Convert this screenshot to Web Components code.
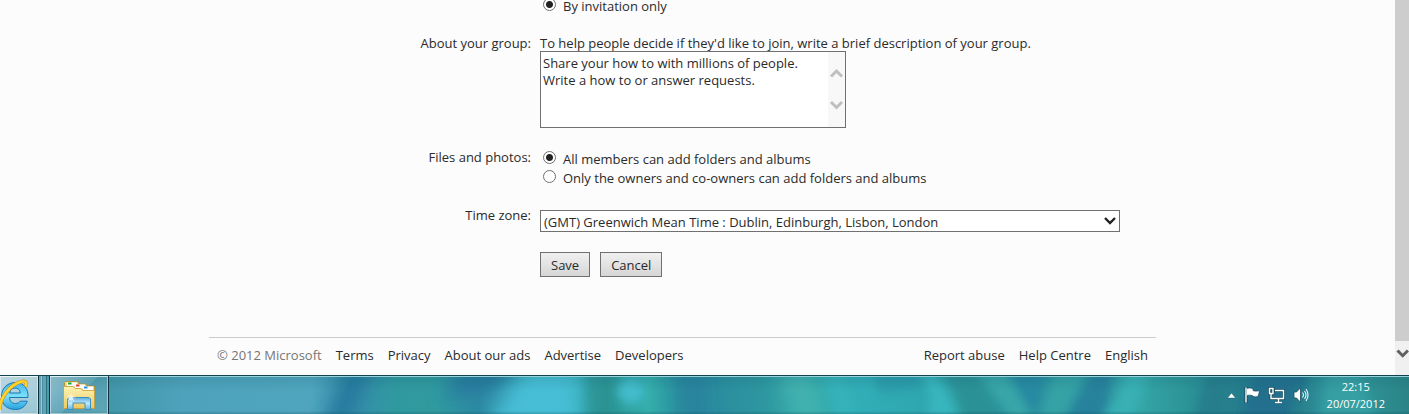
<!DOCTYPE html>
<html lang="en">
<head>
<meta charset="utf-8">
<title>Group options</title>
<style>
html,
body {
  height: 100%;
}

body {
  margin: 0;
  overflow: hidden;
  display: flex;
  flex-direction: column;
  background: #fcfcfc;
  color: #2a2a2a;
  font: 13px/17px "Open Sans", "Noto Sans", sans-serif;
}
</style>
</head>
<body>
<browser-view>
  <group-form></group-form>
  <page-footer>
    <span>© 2012 Microsoft</span>
    <a href="#terms">Terms</a>
    <a href="#privacy">Privacy</a>
    <a href="#ads">About our ads</a>
    <a href="#advertise">Advertise</a>
    <a href="#developers">Developers</a>
    <a slot="end" href="#report">Report abuse</a>
    <a slot="end" href="#help">Help Centre</a>
    <a slot="end" href="#language">English</a>
  </page-footer>
</browser-view>
<task-bar></task-bar>

<script>
/**
 * Attaches an open shadow root filled with the given markup.
 *
 * @param {HTMLElement} host
 * @param {string} html
 */
const render = (host, html) => {
  const template = document.createElement('template');
  template.innerHTML = html;
  host.attachShadow({ mode: 'open' }).appendChild(template.content.cloneNode(true));
};

/** Scrolling page area with its scroll bar. */
class BrowserView extends HTMLElement {
  constructor() {
    super();
    render(this, `
<style>
:host {
  flex: 1;
  min-height: 0;
  display: flex;
  overflow: hidden;
}

main {
  flex: 1;
  min-width: 0;
  padding: 0 239px 0 209px;
}

.scroll {
  width: 14px;
  display: flex;
  flex-direction: column;
  background: #f0f0f0;
}

.thumb {
  flex: 1;
  background: #cdcdcd;
}

.down {
  height: 34px;
  padding-top: 5px;
  box-sizing: border-box;
}

svg {
  display: block;
}
</style>
<main><slot></slot></main>
<div class="scroll">
  <div class="thumb"></div>
  <div class="down">
    <svg width="14" height="14" viewBox="0 0 14 14"><path d="M2.500 4.500l5.200 5.200 5.200-5.200" fill="none" stroke="#606060" stroke-width="3"/></svg>
  </div>
</div>
`);
  }
}

/** One line of the form: a right aligned label and its field. */
class FormRow extends HTMLElement {
  constructor() {
    super();
    render(this, `
<style>
:host {
  display: grid;
  grid-template-columns: 322px 1fr;
  column-gap: 9px;
}

.label {
  text-align: right;
}
</style>
<div class="label"><slot name="label"></slot></div>
<div><slot></slot></div>
`);
  }
}

/** A radio button with its text. */
class RadioOption extends HTMLElement {
  constructor() {
    super();
    render(this, `
<style>
:host {
  display: flex;
  align-items: flex-start;
  gap: 7px;
  height: 19px;
  padding-left: 3px;
}

::slotted(input) {
  appearance: none;
  box-sizing: border-box;
  width: 13px;
  height: 13px;
  margin: 1px 0 0;
  border: 1px solid #707070;
  border-radius: 50%;
  background: #fff;
}

::slotted(input:checked) {
  background: radial-gradient(circle, #212121 3px, #fff 4px);
}

::slotted(label) {
  padding-top: 1px;
}
</style>
<slot></slot>
`);
  }
}

/** Frame round a textarea, with scroll arrows on the right. */
class TextFrame extends HTMLElement {
  constructor() {
    super();
    render(this, `
<style>
:host {
  display: flex;
  box-sizing: border-box;
  width: 306px;
  height: 77px;
  border: 1px solid #707070;
  background: #fff;
}

::slotted(textarea) {
  flex: 1;
  min-width: 0;
  margin: 0;
  padding: 3px 2px;
  border: 0;
  outline: 0;
  resize: none;
  overflow: hidden;
  background: #fff;
  color: inherit;
  font: inherit;
}

.arrows {
  display: flex;
  flex-direction: column;
  gap: 20px;
  width: 17px;
  padding-top: 15px;
  background: #f8f8f8;
}

path {
  fill: none;
  stroke: #bfbfbf;
  stroke-width: 3;
}
</style>
<slot></slot>
<div class="arrows">
  <svg width="17" height="12" viewBox="0 0 17 12"><path d="M3 9.500l5.500-5.500 5.500 5.500"/></svg>
  <svg width="17" height="12" viewBox="0 0 17 12"><path d="M3 3l5.500 5.500 5.500-5.500"/></svg>
</div>
`);
  }
}

/** Frame round a select, with its arrow. */
class SelectFrame extends HTMLElement {
  constructor() {
    super();
    render(this, `
<style>
:host {
  display: grid;
  align-items: center;
  box-sizing: border-box;
  width: 580px;
  height: 22px;
  border: 1px solid #707070;
  background: #fff;
}

::slotted(select) {
  grid-area: 1 / 1;
  appearance: none;
  width: 100%;
  height: 20px;
  margin: 0;
  padding: 2px 20px 0 3px;
  border: 0;
  background: none;
  color: inherit;
  font: inherit;
}

svg {
  grid-area: 1 / 1;
  justify-self: end;
  margin-right: 2px;
  pointer-events: none;
}
</style>
<slot></slot>
<svg width="14" height="12" viewBox="0 0 14 12"><path d="M2 3l5 5 5-5" fill="none" stroke="#212121" stroke-width="2.4"/></svg>
`);
  }
}

class GroupForm extends HTMLElement {
  constructor() {
    super();
    render(this, `
<style>
:host {
  display: block;
}

form {
  display: flex;
  flex-direction: column;
  gap: 19px;
  margin-top: -3px;
}

text-frame {
  margin: -1px 0 2px;
}

.options {
  margin-top: 1px;
}

select-frame {
  margin-top: 3px;
}

.buttons {
  display: flex;
  gap: 10px;
  margin-top: 1px;
}

button {
  box-sizing: border-box;
  height: 25px;
  padding: 2px 10px 0;
  border: 1px solid #707070;
  background: linear-gradient(#f0f0f0, #d6d6d6);
  color: inherit;
  font: inherit;
}
</style>
<form>
  <form-row>
    <radio-option>
      <input type="radio" name="join" id="invite" checked>
      <label for="invite">By invitation only</label>
    </radio-option>
  </form-row>
  <form-row>
    <label slot="label" for="about">About your group:</label>
    <div>To help people decide if they'd like to join, write a brief description of your group.</div>
    <text-frame>
      <textarea id="about">Share your how to with millions of people.
Write a how to or answer requests.</textarea>
    </text-frame>
  </form-row>
  <form-row>
    <span slot="label">Files and photos:</span>
    <div class="options">
      <radio-option>
        <input type="radio" name="files" id="all" checked>
        <label for="all">All members can add folders and albums</label>
      </radio-option>
      <radio-option>
        <input type="radio" name="files" id="owners">
        <label for="owners">Only the owners and co-owners can add folders and albums</label>
      </radio-option>
    </div>
  </form-row>
  <form-row>
    <label slot="label" for="zone">Time zone:</label>
    <select-frame>
      <select id="zone">
        <option>(GMT) Greenwich Mean Time : Dublin, Edinburgh, Lisbon, London</option>
      </select>
    </select-frame>
  </form-row>
  <form-row>
    <div class="buttons">
      <button type="button">Save</button>
      <button type="button">Cancel</button>
    </div>
  </form-row>
</form>
`);
  }
}

class PageFooter extends HTMLElement {
  constructor() {
    super();
    render(this, `
<style>
:host {
  display: flex;
  justify-content: space-between;
  margin-top: 60px;
  padding: 9px 8px 0;
  border-top: 1px solid #ccc;
}

div {
  display: flex;
  gap: 14px;
}

::slotted(span) {
  color: #767676;
}

::slotted(a) {
  color: inherit;
  text-decoration: none;
}
</style>
<div><slot></slot></div>
<div><slot name="end"></slot></div>
`);
  }
}

/** A program button on the task bar. */
class TaskButton extends HTMLElement {
  constructor() {
    super();
    render(this, `
<style>
:host {
  display: flex;
}

button {
  display: flex;
  align-items: center;
  justify-content: center;
  width: 100%;
  padding: 0;
  border: 1px solid #12303a;
  border-width: 0 1px;
  border-left-width: var(--left-edge, 1px);
  background: var(--face, linear-gradient(135deg, #ffffff66, #ffffff2b 50%, #ffffff14 51%, #ffffff26));
  box-shadow: inset 0 0 0 1px #ffffff73;
}
</style>
<button type="button"><slot></slot></button>
`);
    this.shadowRoot.querySelector('button').setAttribute('aria-label', this.getAttribute('name') ?? '');
  }
}

class TaskBar extends HTMLElement {
  constructor() {
    super();
    render(this, `
<style>
:host {
  position: relative;
  display: flex;
  height: 39px;
  box-sizing: border-box;
  border-top: 1px solid #12434d;
  overflow: hidden;
  background: #2f94a4;
  color: #fff;
}

/* wallpaper seen through the glass */
.glass {
  position: absolute;
  inset: 0;
  width: 100%;
  height: 100%;
}

.edge {
  position: absolute;
  inset: 0 0 auto;
  height: 1px;
  background: #96d2da;
}

.programs,
.tray {
  position: relative;
  display: flex;
}

.programs {
  flex: 1;
}

.browser {
  width: 39px;
  --left-edge: 0;
  --face: linear-gradient(160deg, #ffffffa6, #ffffff73);
}

.stack {
  width: 10px;
  background: linear-gradient(90deg, #5fa3b5 2px, #9cc8d3 2px 3px, #4b8c9e 3px 4px, #5fa3b5 4px 7px, #2a6f80 7px 8px, #4c9bb0 8px);
}

.folders {
  width: 60px;
}

.tray {
  align-items: center;
  gap: 8px;
  padding-right: 24px;
}

.clock {
  margin-left: 10px;
  text-align: center;
  font-size: 11px;
  line-height: 17px;
}

svg {
  display: block;
}
</style>
<svg class="glass" viewBox="0 0 1409 38" preserveAspectRatio="none">
  <defs>
    <linearGradient id="base">
      <stop offset="0" stop-color="#4595b2"/>
      <stop offset=".08" stop-color="#4397a9"/>
      <stop offset=".13" stop-color="#4ea2bb"/>
      <stop offset=".22" stop-color="#50a5be"/>
      <stop offset=".25" stop-color="#3a8fac"/>
      <stop offset=".28" stop-color="#2f999f"/>
      <stop offset=".31" stop-color="#309a9f"/>
      <stop offset=".34" stop-color="#2c88a2"/>
      <stop offset=".38" stop-color="#43bacd"/>
      <stop offset=".41" stop-color="#3bb7c4"/>
      <stop offset=".43" stop-color="#2c9799"/>
      <stop offset=".46" stop-color="#35aeac"/>
      <stop offset=".48" stop-color="#2b949f"/>
      <stop offset=".5" stop-color="#2b8b9f"/>
      <stop offset=".54" stop-color="#2d969f"/>
      <stop offset=".57" stop-color="#35a9a9"/>
      <stop offset=".61" stop-color="#31aeb8"/>
      <stop offset=".66" stop-color="#2fa6ad"/>
      <stop offset=".69" stop-color="#2d9a9d"/>
      <stop offset=".73" stop-color="#288e9e"/>
      <stop offset=".77" stop-color="#2b919f"/>
      <stop offset=".81" stop-color="#34a5a7"/>
      <stop offset=".84" stop-color="#2c9598"/>
      <stop offset=".88" stop-color="#247c8c"/>
      <stop offset=".92" stop-color="#287e8c"/>
      <stop offset=".95" stop-color="#319ba0"/>
      <stop offset="1" stop-color="#2a8486"/>
    </linearGradient>
    <linearGradient id="depth" x2="0" y2="1">
      <stop offset="0" stop-color="#0a5060" stop-opacity=".16"/>
      <stop offset=".4" stop-color="#0a5060" stop-opacity="0"/>
      <stop offset=".92" stop-color="#0a5060" stop-opacity="0"/>
      <stop offset="1" stop-color="#0a5060" stop-opacity=".3"/>
    </linearGradient>
    <filter id="haze" x="-10%" y="-60%" width="120%" height="220%"><feGaussianBlur stdDeviation="10 7"/></filter>
    <filter id="mist" x="-10%" y="-60%" width="120%" height="220%"><feGaussianBlur stdDeviation="5"/></filter>
  </defs>
  <rect width="1409" height="38" fill="url(#base)"/>
  <g filter="url(#haze)">
    <path d="M348-12h26l-26 62h-24z" fill="#24789c"/>
    <path d="M460-12h66l-34 26-46 10z" fill="#267c9e"/>
    <path d="M534-12h36l8 62h-90z" fill="#46bed5"/>
    <path d="M588-12h22l6 62h-30z" fill="#2a9292"/>
    <path d="M676-12h24l6 56h-20z" fill="#27809c"/>
    <path d="M780-12h28l16 62h-28z" fill="#42b2b0"/>
  </g>
  <g filter="url(#mist)">
    <ellipse cx="631" cy="15" rx="13" ry="13" fill="#42bccc"/>
    <path d="M820-12h20l20 62h-20z" fill="#36b2ba"/>
    <path d="M870-12h44l10 24-44 6z" fill="#2b9cab"/>
    <path d="M918-12q34 20 40 62h-34q14-28-6-62z" fill="#38b6bf"/>
    <path d="M934-12h36l40 62h-44q-4-36-32-62z" fill="#2b9197"/>
    <path d="M972-12h28l38 62h-22z" fill="#37a6a9"/>
    <path d="M1008-12h36l-12 50z" fill="#2689a3"/>
    <path d="M1056-12h34l-30 62h-24z" fill="#36a2a6"/>
    <path d="M1096-12h18l-12 62h-38z" fill="#27819b"/>
    <path d="M1126-12h24l-18 62h-40q30-22 34-62z" fill="#38b0b4"/>
    <path d="M1210-12h30l-14 62h-34z" fill="#267e8c"/>
    <path d="M1258-12h44l-16 62h-46z" fill="#246f8e"/>
    <path d="M1300-12h8l-8 40z" fill="#1f648b"/>
    <path d="M1330-12h26l22 62h-60z" fill="#349fa3"/>
  </g>
  <rect width="1409" height="38" fill="url(#depth)"/>
</svg>
<div class="edge"></div>
<div class="programs">
  <task-button class="browser" name="Internet Explorer">
    <svg width="38" height="36" viewBox="2 0 38 36">
      <defs>
        <linearGradient id="e" x2="0" y2="1"><stop offset="0" stop-color="#3fb2ea"/><stop offset=".5" stop-color="#7be0fb"/><stop offset="1" stop-color="#27a2dd"/></linearGradient>
      </defs>
      <path d="M30 20.500H11.500c.3 4 2.500 6 6 6 2.300 0 3.700-.8 4.700-2.300h7C27.500 29.300 23.500 32.500 17.500 32.500 9 32.500 3.500 27.500 3.500 19.500 3.500 11.500 9 5.500 17.500 5.500c8 0 13 5.600 12.500 15zM11.700 16h10.600C22 12.800 20 11 17 11s-4.900 1.900-5.300 5z" fill="url(#e)" stroke="#1878b5"/>
      <path d="M2 33C1 22 12 7 24 4.500c4-.8 5.500 1.500 3.500 5" fill="none" stroke="#d49312" stroke-width="3.600"/>
      <path d="M2 33C1 22 12 7 24 4.500c4-.8 5.500 1.500 3.500 5" fill="none" stroke="#ffd52e" stroke-width="2.400"/>
    </svg>
  </task-button>
  <div class="stack"></div>
  <task-button class="folders" name="File Explorer">
    <svg width="34" height="32" viewBox="0 0 34 32">
      <defs>
        <linearGradient id="f" x2="0" y2="1"><stop offset="0" stop-color="#fdf3b4"/><stop offset="1" stop-color="#ecc95d"/></linearGradient>
        <linearGradient id="b" x2="0" y2="1"><stop offset="0" stop-color="#5eaede"/><stop offset=".5" stop-color="#bfe8f9"/><stop offset="1" stop-color="#5fb2dc"/></linearGradient>
      </defs>
      <path d="M2.500 12V3.500l1-1H16l1 2.500h7l1 2h7.500v7z" fill="#efd98c" stroke="#b28a2a" stroke-width=".8"/>
      <path d="M5 3.500h10v4H5zM13 5.500h10v4H13zM21 7.500h10v4H21z" fill="#fff"/>
      <path d="M6 3.500h3.500v2H6z" fill="#12a82b"/>
      <path d="M14 5.500h3.500v2H14z" fill="#d8442c"/>
      <path d="M22 7.500h3.500v2H22z" fill="#2890dd"/>
      <path d="M1.500 29.500V8.500l1-1h9l1.500 2h6l1.500 2H32.500v18z" fill="url(#f)" stroke="#c69c3a" stroke-width=".8"/>
      <path d="M5.500 30.500V20l1.500-1.500h20l1.500 1.500v10.500h-5.500v-6.500h-12v6.500z" fill="url(#b)" stroke="#3d8fc2"/>
      <path d="M9 13l.6 4.500 3.400-2.500-2.500 3.400 4.500.6-4.500.6 2.500 3.400-3.400-2.500L9 25l-.6-4.500L5 23l2.500-3.400L3 19l4.500-.6L5 15l3.400 2.500z" fill="#fff" opacity=".85"/>
    </svg>
  </task-button>
</div>
<div class="tray">
  <svg width="9" height="8" viewBox="0 0 9 8"><path d="M.5 7h8L4.500 2z" fill="#fff" stroke="#1d5766" stroke-width=".4"/></svg>
  <svg width="16" height="18" viewBox="0 0 16 18">
    <path d="M2 1v16" stroke="#174f60" stroke-width="3.200"/>
    <path d="M2.500 2.500c2-.8 4-.8 6.500 0v2c2 .8 4 .8 6.500 0-.3 3-1 5-2 6-1.500.8-3.500.6-5-.8-2-.7-4-.7-6 0z" fill="#fff" stroke="#174f60" stroke-width=".8"/>
    <path d="M2 1.500v15" stroke="#fff" stroke-width="1.400"/>
  </svg>
  <svg width="17" height="17" viewBox="0 0 17 17" fill="none">
    <path d="M6 3.500h9.500v8H6M10.500 12v3M7 15.500h7M3 7v4.500h3M1.500 1.500h3.500v5H1.500z" stroke="#174f60" stroke-width="3"/>
    <path d="M7 3.500h8.500v8H6M10.500 12v3M7 15.500h7M3 7v4.500h3M1.500 1.500h3.500v5H1.500z" stroke="#fff" stroke-width="1.400"/>
  </svg>
  <svg width="16" height="16" viewBox="0 0 16 16">
    <path d="M1 5h2.500L7.500 .8v14.400L3.500 11H1z" fill="#fff" stroke="#174f60" stroke-width=".8"/>
    <path d="M9.500 5.500q2 2.500 0 5M11.500 4q3 4 0 8M13 2q4 6 0 12" fill="none" stroke="#e8f6f8" stroke-width="1.100"/>
  </svg>
  <div class="clock">
    <div>22:15</div>
    <div>20/07/2012</div>
  </div>
</div>
`);
  }
}

/** @returns {void} */
const init = () => {
  customElements.define('form-row', FormRow);
  customElements.define('radio-option', RadioOption);
  customElements.define('text-frame', TextFrame);
  customElements.define('select-frame', SelectFrame);
  customElements.define('group-form', GroupForm);
  customElements.define('page-footer', PageFooter);
  customElements.define('task-button', TaskButton);
  customElements.define('task-bar', TaskBar);
  customElements.define('browser-view', BrowserView);
};

init();
</script>
</body>
</html>
